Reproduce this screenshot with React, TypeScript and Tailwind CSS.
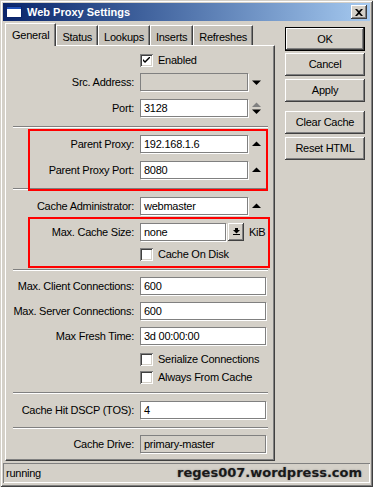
import React from "react";

const font = "font-['Liberation_Sans',Arial,sans-serif]";

const sunken =
  "shadow-[inset_1px_1px_0_#808080,inset_-1px_-1px_0_#fff,inset_2px_2px_0_#404040,inset_-2px_-2px_0_#d4d0c8]";
const raised =
  "shadow-[inset_-1px_-1px_0_#404040,inset_1px_1px_0_#fff,inset_-2px_-2px_0_#808080]";

const UpArrow = ({ color = "#000" }: { color?: string }) => (
  <svg width="10" height="6" viewBox="0 0 10 6">
    <polygon points="0,5 9,5 4.5,0.5" fill={color} />
  </svg>
);

const DownArrow = ({ color = "#000" }: { color?: string }) => (
  <svg width="10" height="6" viewBox="0 0 10 6">
    <polygon points="0,0.5 9,0.5 4.5,5" fill={color} />
  </svg>
);

const Label = ({ text }: { text: string }) => (
  <span className="w-[128px] shrink-0 text-right whitespace-nowrap">{text}</span>
);

const TextBox = ({
  value,
  width,
  disabled,
}: {
  value: string;
  width: number;
  disabled?: boolean;
}) => (
  <div
    className={`ml-[6px] h-[18px] border border-[#808080] shadow-[1px_1px_0_#fff] pl-[3px] leading-[16px] whitespace-nowrap overflow-hidden ${
      disabled ? "bg-[#d4d0c8]" : "bg-white"
    }`}
    style={{ width }}
  >
    {value}
  </div>
);

const Field = ({
  label,
  value,
  width = 108,
  disabled,
  after,
  className = "",
}: {
  label: string;
  value: string;
  width?: number;
  disabled?: boolean;
  after?: React.ReactNode;
  className?: string;
}) => (
  <div className={`flex items-center h-[18px] ${className}`}>
    <Label text={label} />
    <TextBox value={value} width={width} disabled={disabled} />
    {after}
  </div>
);

const CheckBox = ({
  label,
  checked,
  className = "",
}: {
  label: string;
  checked?: boolean;
  className?: string;
}) => (
  <div className={`flex items-center h-[13px] pl-[134px] ${className}`}>
    <div className={`w-[13px] h-[13px] bg-white flex items-center justify-center ${sunken}`}>
      {checked && (
        <svg width="7" height="7" viewBox="0 0 7 7">
          <path d="M0 2 L0 4 L2 6 L7 1 L7 -1 L2 4 Z" fill="#000" />
        </svg>
      )}
    </div>
    <span className="ml-[5px] leading-[13px]">{label}</span>
  </div>
);

const Separator = ({ className = "" }: { className?: string }) => (
  <div className={`ml-[7px] w-[255px] h-[2px] border-t border-[#808080] border-b border-b-white ${className}`} />
);

const Button = ({
  text,
  isDefault,
  className = "",
}: {
  text: string;
  isDefault?: boolean;
  className?: string;
}) => (
  <div
    className={`w-[80px] flex items-center justify-center ${
      isDefault ? "h-[24px] border border-black" : "h-[23px]"
    } ${className}`}
  >
    <div className={`w-full h-full flex items-center justify-center ${raised}`}>{text}</div>
  </div>
);

const tabs = ["Status", "Lookups", "Inserts", "Refreshes"];

export default function App() {
  return (
    <div
      className={`w-[373px] h-[487px] bg-[#d4d0c8] p-[3px] flex flex-col text-[11px] tracking-[-0.25px] text-black ${font} shadow-[inset_1px_1px_0_#d4d0c8,inset_-1px_-1px_0_#404040,inset_2px_2px_0_#fff,inset_-2px_-2px_0_#808080]`}
    >
      {/* title bar */}
      <div className="h-[18px] flex items-center bg-linear-to-r from-[#0a246a] to-[#a6caf0] px-[3px]">
        <svg width="16" height="12" viewBox="0 0 16 12">
          <rect x="0.5" y="0.5" width="15" height="11" fill="#fff" stroke="#0a246a" />
          <rect x="1" y="1" width="14" height="2" fill="#2050b8" />
        </svg>
        <span className="ml-[5px] font-bold text-white tracking-normal">Web Proxy Settings</span>
        <div className={`ml-auto w-[16px] h-[14px] bg-[#d4d0c8] flex items-center justify-center ${raised}`}>
          <svg width="8" height="7" viewBox="0 0 8 7">
            <path d="M0 0 L2 0 L4 2 L6 0 L8 0 L5 3.5 L8 7 L6 7 L4 5 L2 7 L0 7 L3 3.5 Z" fill="#000" />
          </svg>
        </div>
      </div>

      {/* body */}
      <div className="flex h-[440px]">
        <div className="ml-[2px] mt-[2px] flex flex-col">
          <div className="flex items-end h-[22px]">
            <div className="relative z-10 h-[23px] -mb-[1px] px-[6px] pt-[3px] bg-[#d4d0c8] border-t border-l border-white border-r border-r-[#404040] shadow-[inset_-1px_0_0_#808080]">
              General
            </div>
            {tabs.map((t) => (
              <div
                key={t}
                className="h-[20px] px-[5px] pt-[3px] bg-[#c8c4bc] border-t border-l border-white border-r border-r-[#404040] shadow-[inset_-1px_0_0_#808080]"
              >
                {t}
              </div>
            ))}
          </div>

          <div className="relative w-[270px] h-[416px] border-l border-t border-white border-r border-b border-r-[#404040] border-b-[#404040] shadow-[inset_-1px_-1px_0_#808080] flex flex-col">
            <CheckBox label="Enabled" checked className="mt-[8px]" />
            <Field
              label="Src. Address:"
              value=""
              disabled
              className="mt-[6px]"
              after={
                <span className="ml-[4px] mt-[1px]">
                  <DownArrow />
                </span>
              }
            />
            <Field
              label="Port:"
              value="3128"
              className="mt-[8px]"
              after={
                <span className="ml-[4px] flex flex-col gap-[1px]">
                  <UpArrow color="#808080" />
                  <DownArrow />
                </span>
              }
            />
            <Separator className="mt-[9px]" />
            <Field
              label="Parent Proxy:"
              value="192.168.1.6"
              className="mt-[7px]"
              after={
                <span className="ml-[4px]">
                  <UpArrow />
                </span>
              }
            />
            <Field
              label="Parent Proxy Port:"
              value="8080"
              className="mt-[8px]"
              after={
                <span className="ml-[4px]">
                  <UpArrow />
                </span>
              }
            />
            <Separator className="mt-[9px]" />
            <Field
              label="Cache Administrator:"
              value="webmaster"
              className="mt-[7px]"
              after={
                <span className="ml-[4px]">
                  <UpArrow />
                </span>
              }
            />
            <Field
              label="Max. Cache Size:"
              value="none"
              width={86}
              className="mt-[8px]"
              after={
                <>
                  <div className={`ml-[2px] w-[16px] h-[18px] bg-[#d4d0c8] flex items-center justify-center ${raised}`}>
                    <svg width="7" height="8" viewBox="0 0 7 8">
                      <rect x="2" y="0" width="3" height="2" fill="#000" />
                      <polygon points="0,2 7,2 3.5,5.5" fill="#000" />
                      <rect x="0" y="6" width="7" height="1" fill="#000" />
                    </svg>
                  </div>
                  <span className="ml-[5px]">KiB</span>
                </>
              }
            />
            <CheckBox label="Cache On Disk" className="mt-[7px]" />
            <Separator className="mt-[8px]" />
            <Field label="Max. Client Connections:" value="600" width={126} className="mt-[6px]" />
            <Field label="Max. Server Connections:" value="600" width={126} className="mt-[7px]" />
            <Field label="Max Fresh Time:" value="3d 00:00:00" width={126} className="mt-[7px]" />
            <CheckBox label="Serialize Connections" className="mt-[8px]" />
            <CheckBox label="Always From Cache" className="mt-[5px]" />
            <Separator className="mt-[8px]" />
            <Field label="Cache Hit DSCP (TOS):" value="4" width={126} className="mt-[7px]" />
            <Separator className="mt-[8px]" />
            <Field label="Cache Drive:" value="primary-master" width={126} disabled className="mt-[6px]" />

            {/* red annotation boxes */}
            <div className="absolute left-[22px] top-[83px] w-[240px] h-[62px] border-2 border-[#ff0000]" />
            <div className="absolute left-[22px] top-[171px] w-[242px] h-[51px] border-2 border-[#ff0000]" />
          </div>
        </div>

        <div className="ml-[10px] mt-[6px] flex flex-col">
          <Button text="OK" isDefault />
          <Button text="Cancel" className="mt-[2px]" />
          <Button text="Apply" className="mt-[3px]" />
          <Button text="Clear Cache" className="mt-[9px]" />
          <Button text="Reset HTML" className="mt-[3px]" />
        </div>
      </div>

      {/* status bar */}
      <div className="mt-[2px] h-[20px] flex items-center pl-[3px] pr-[8px] shadow-[inset_1px_1px_0_#808080,inset_-1px_-1px_0_#fff]">
        <span>running</span>
        <span className="ml-auto font-['DejaVu_Sans',Verdana,sans-serif] font-bold text-[13px] tracking-normal text-[#1a1a1a] [text-shadow:0_0_2px_#888]">
          reges007.wordpress.com
        </span>
      </div>
    </div>
  );
}
